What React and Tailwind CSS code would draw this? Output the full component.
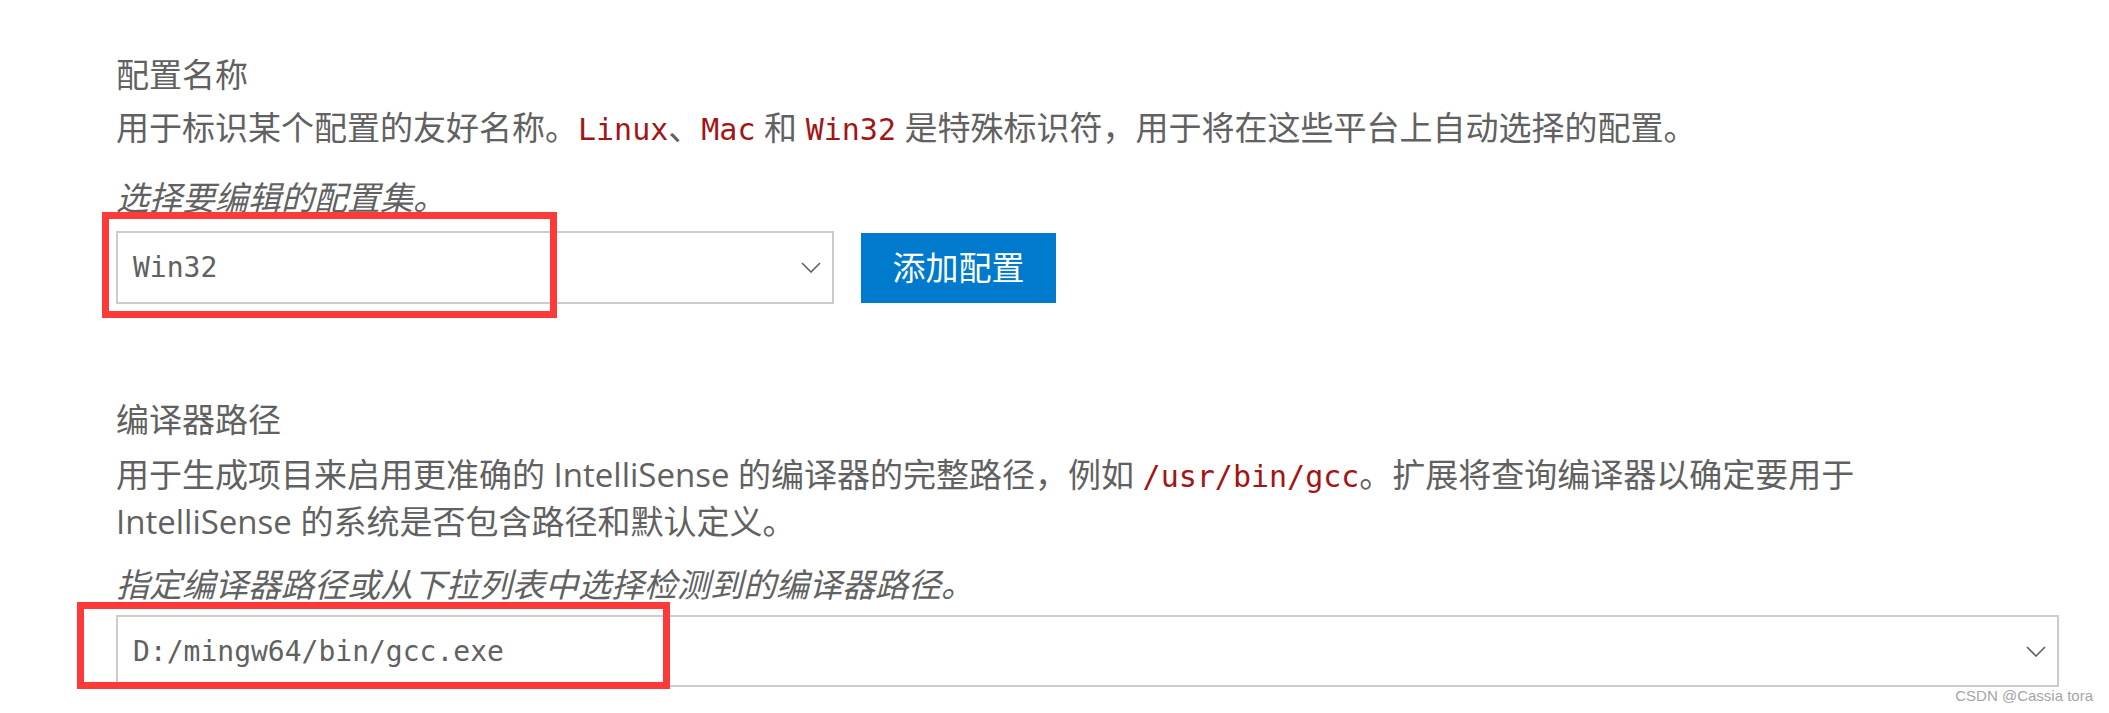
import React from 'react';

const SANS = "font-['Open_Sans','Noto_Sans_CJK_SC',sans-serif]";

function Code({ children }) {
  return (
    <span className="font-['DejaVu_Sans_Mono','Noto_Sans_CJK_SC',monospace] text-[30px] text-[#a31515]">
      {children}
    </span>
  );
}

function Chevron() {
  return (
    <svg width="20" height="11" viewBox="0 0 20 11" fill="none">
      <path d="M1 1 L10 10 L19 1" stroke="#616161" strokeWidth="1.6" />
    </svg>
  );
}

function Select({ value, width, height }) {
  return (
    <div
      className={`${width} ${height} flex items-center justify-between border-2 border-[#cccccc] bg-white pl-[15px] pr-[11px]`}
    >
      <span className="font-['DejaVu_Sans_Mono',monospace] text-[28px] text-[#616161]">{value}</span>
      <Chevron />
    </div>
  );
}

export default function App() {
  return (
    <div className={`relative h-[713px] w-full overflow-hidden bg-white pl-[116px] pt-[52px] text-[33px] leading-[45px] text-[#616161] ${SANS}`}>
      {/* 配置名称 */}
      <div className="h-[45px]">配置名称</div>
      <div className="mt-[8px] whitespace-nowrap">
        用于标识某个配置的友好名称。<Code>Linux</Code>、<Code>Mac</Code> 和 <Code>Win32</Code> 是特殊标识符，用于将在这些平台上自动选择的配置。
      </div>
      <div className="mt-[23px] italic">选择要编辑的配置集。</div>
      <div className="mt-[11px] flex items-center gap-[27px]">
        <Select value="Win32" width="w-[718px]" height="h-[73px]" />
        <button className="flex h-[70px] w-[195px] items-center justify-center bg-[#007acc] text-[33px] text-white">
          添加配置
        </button>
      </div>

      {/* 编译器路径 */}
      <div className="mt-[93px] h-[45px]">编译器路径</div>
      <div className="mt-[10px] whitespace-nowrap">
        <div>
          用于生成项目来启用更准确的 IntelliSense 的编译器的完整路径，例如 <Code>/usr/bin/gcc</Code>。扩展将查询编译器以确定要用于
        </div>
        <div>IntelliSense 的系统是否包含路径和默认定义。</div>
      </div>
      <div className="mt-[18px] italic">指定编译器路径或从下拉列表中选择检测到的编译器路径。</div>
      <div className="mt-[8px]">
        <Select value="D:/mingw64/bin/gcc.exe" width="w-[1943px]" height="h-[72px]" />
      </div>

      {/* annotation boxes */}
      <div className="pointer-events-none absolute left-[102px] top-[212px] h-[106px] w-[455px] border-[7px] border-[#fd3a3a]" />
      <div className="pointer-events-none absolute left-[77px] top-[602px] h-[87px] w-[593px] border-[7px] border-[#fd3a3a]" />

      {/* watermark */}
      <div className="absolute right-[16px] top-[686px] font-['Liberation_Sans',sans-serif] text-[15px] leading-[20px] text-[#a5a5a5]">
        CSDN @Cassia tora
      </div>
    </div>
  );
}
